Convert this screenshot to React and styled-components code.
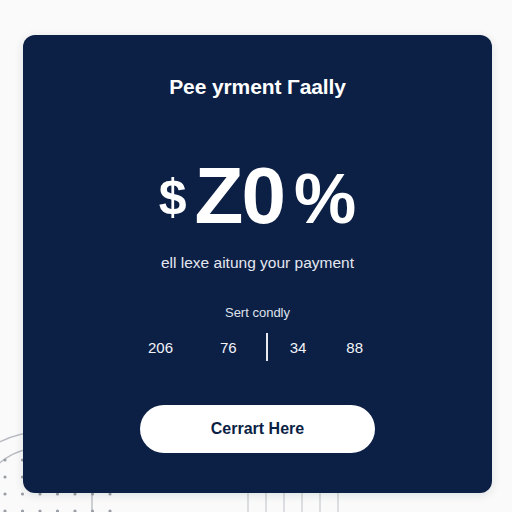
import styled, {createGlobalStyle} from 'styled-components';

const GlobalStyle = createGlobalStyle`
    html, body{
        margin:0;
        padding:0;
        background:#fafafa;
    }
    *{
        box-sizing:border-box;
    }
`;

const Page = styled.div`
    position:relative;
    width:512px;
    height:512px;
    overflow:hidden;
    background:#fafafa;
    font-family:"Liberation Sans", Arial, sans-serif;
    padding:35px 20px 19px 23px;
`;

const Backdrop = styled.svg`
    position:absolute;
    left:0;
    bottom:0;
    width:512px;
    height:120px;
`;

const Card = styled.section`
    position:relative;
    width:469px;
    height:458px;
    background:#0c1f45;
    border-radius:12px;
    box-shadow:0 2px 10px rgba(20,30,60,0.12);
    display:flex;
    flex-direction:column;
    align-items:center;
    color:#fff;
    padding-top:40px;
`;

const Title = styled.h1`
    margin:0;
    font-size:21px;
    font-weight:700;
    line-height:24px;
    letter-spacing:-0.1px;
`;

const Amount = styled.div`
    display:flex;
    align-items:center;
    margin-top:57px;
    height:80px;
    font-weight:700;
`;

const Currency = styled.span`
    font-size:50px;
    margin-right:8px;
    margin-top:2px;
`;

const Digit = styled.span`
    font-size:80px;
    line-height:80px;
    letter-spacing:-2px;
`;

const Percent = styled.span`
    font-size:70px;
    margin-left:10px;
    margin-top:6px;
`;

const Subtitle = styled.p`
    margin:18px 0 0;
    font-size:15.5px;
    color:#e3e7f0;
`;

const Caption = styled.p`
    margin:33px 0 0;
    font-size:13px;
    color:#dfe3ec;
`;

const Stats = styled.div`
    display:flex;
    align-items:center;
    margin-top:12px;
    margin-left:-4px;
    height:30px;
`;

const Stat = styled.span`
    font-size:15px;
    color:#f1f3f8;
    margin-left:${p=>p.$gap || 0}px;
`;

const Divider = styled.span`
    width:2px;
    height:28px;
    background:#e8ebf2;
    margin-left:${p=>p.$gap}px;
`;

const Button = styled.button`
    margin-top:43px;
    width:235px;
    height:48px;
    border:0;
    border-radius:24px;
    background:#fff;
    color:#0c1f45;
    font-family:inherit;
    font-size:16px;
    font-weight:700;
    cursor:pointer;
`;

const dots = [];
for(let r=0; r<4; r++){
    for(let c=0; c<7; c++){
        dots.push({x:5 + c*17.5, y:68 + r*17});
    }
}

function App(){
    return(
        <Page>
            <GlobalStyle/>
            <Backdrop viewBox="0 0 512 120">
                <g fill="none" stroke="#b9bcc2" strokeWidth="1.4">
                    <path d="M-20 62 Q10 40 40 40"/>
                    <path d="M-10 80 Q12 56 40 56"/>
                    <line x1="92" y1="96" x2="92" y2="120"/>
                </g>
                <g fill="#9a9ea6">
                    {dots.map((d, i)=><circle key={i} cx={d.x} cy={d.y} r="1.6"/>)}
                </g>
                <g stroke="#c8cace" strokeWidth="1.2">
                    {[248, 266, 284, 302, 320, 338].map(x=><line key={x} x1={x} y1="100" x2={x} y2="120"/>)}
                </g>
            </Backdrop>
            <Card>
                <Title>Pee yrment Γaally</Title>
                <Amount>
                    <Currency>$</Currency>
                    <Digit>Z0</Digit>
                    <Percent>%</Percent>
                </Amount>
                <Subtitle>ell lexe aitung your payment</Subtitle>
                <Caption>Sert condly</Caption>
                <Stats>
                    <Stat>206</Stat>
                    <Stat $gap={47}>76</Stat>
                    <Divider $gap={29}/>
                    <Stat $gap={22}>34</Stat>
                    <Stat $gap={40}>88</Stat>
                </Stats>
                <Button>Cerrart Here</Button>
            </Card>
        </Page>
    )
}

export default App;
